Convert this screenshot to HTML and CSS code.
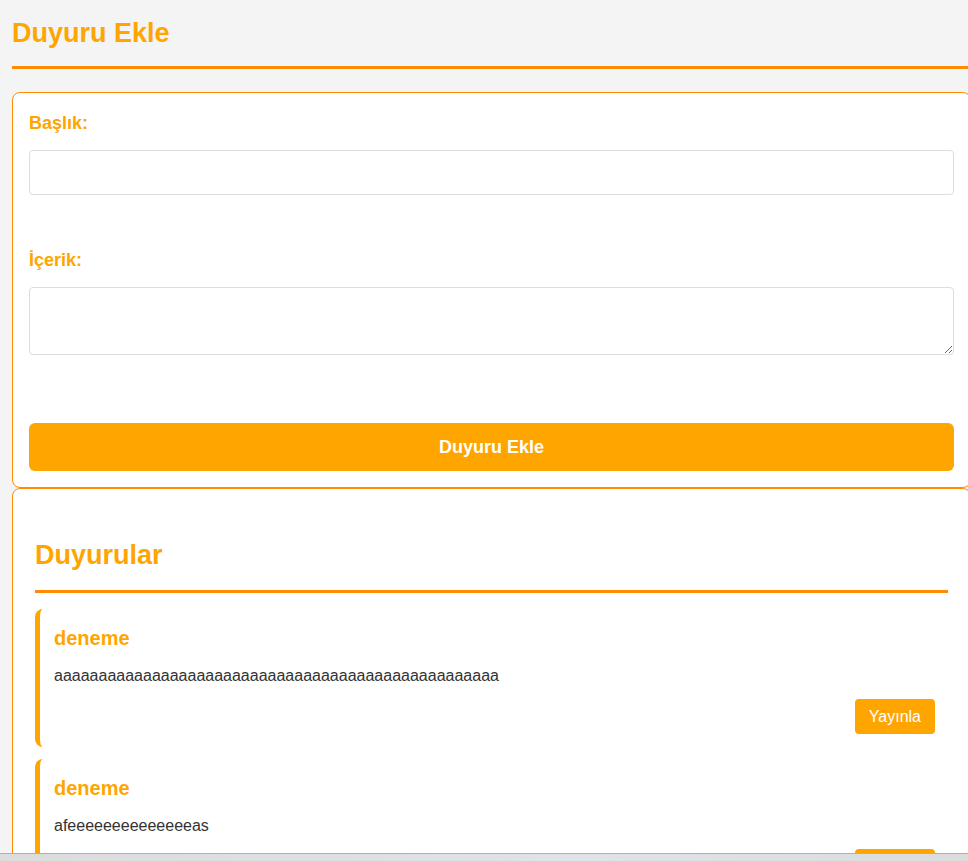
FILE: index.html
```html
<!DOCTYPE html>
<html lang="tr">
<head>
<meta charset="utf-8">
<title>Duyuru Ekle</title>
<link rel="stylesheet" href="styles.css">
</head>
<body>
<div class="page">
  <h1 class="page-title">Duyuru Ekle</h1>

  <form class="card form-card">
    <label class="field-label" for="baslik">Başlık:</label>
    <input class="field-input" id="baslik" type="text">
    <label class="field-label field-label--second" for="icerik">İçerik:</label>
    <textarea class="field-textarea" id="icerik"></textarea>
    <button class="submit-btn" type="button">Duyuru Ekle</button>
  </form>

  <section class="card list-card">
    <h2 class="list-title">Duyurular</h2>
    <div class="notice">
      <h3 class="notice-title">deneme</h3>
      <p class="notice-text">aaaaaaaaaaaaaaaaaaaaaaaaaaaaaaaaaaaaaaaaaaaaaaaaaa</p>
      <div class="notice-actions"><button class="publish-btn" type="button">Yayınla</button></div>
    </div>
    <div class="notice">
      <h3 class="notice-title">deneme</h3>
      <p class="notice-text">afeeeeeeeeeeeeeeas</p>
      <div class="notice-actions"><button class="publish-btn" type="button">Yayınla</button></div>
    </div>
  </section>
</div>
<div class="taskbar"></div>
</body>
</html>
```

FILE: styles.css
```css
html {
  overflow-x: hidden;
  scrollbar-width: none;
}
body {
  margin: 0;
  background: #f4f4f4;
  font-family: "Liberation Sans", Arial, sans-serif;
  font-size: 16px;
  color: #333;
}
.page {
  width: 959px;
  margin-left: 12px;
  padding-top: 18px;
}
.page-title {
  margin: 0 0 23px;
  font-size: 27px;
  line-height: 31px;
  font-weight: bold;
  color: #ffa500;
  padding-bottom: 17px;
  border-bottom: 3px solid #ff8c00;
}
.card {
  background: #fff;
  border: 1px solid #ff8c00;
  border-radius: 8px;
}
.form-card {
  display: flex;
  flex-direction: column;
  padding: 20px 16px 16px;
}
.field-label {
  display: block;
  font-size: 18px;
  line-height: 21px;
  font-weight: bold;
  color: #ffa500;
  margin-bottom: 16px;
}
.field-label--second {
  margin-top: 55px;
}
.field-input,
.field-textarea {
  box-sizing: border-box;
  width: 100%;
  border: 1px solid #ddd;
  border-radius: 4px;
  font-family: inherit;
  font-size: 16px;
  margin: 0;
  padding: 10px;
}
.field-input {
  height: 45px;
}
.field-textarea {
  height: 68px;
  resize: vertical;
  display: block;
}
.submit-btn {
  margin-top: 68px;
  height: 48px;
  border: none;
  border-radius: 6px;
  background: #ffa500;
  color: #fff;
  font-family: inherit;
  font-size: 18px;
  font-weight: bold;
}
.list-card {
  padding: 51px 22px 20px;
}
.list-title {
  margin: 0 0 16px;
  font-size: 27px;
  line-height: 31px;
  font-weight: bold;
  color: #ffa500;
  padding-bottom: 19px;
  border-bottom: 3px solid #ff8c00;
}
.notice {
  background: #fff;
  border-left: 5px solid #ffa500;
  border-radius: 8px;
  padding: 18px 13px 13px 14px;
  margin-bottom: 12px;
}
.notice-title {
  margin: 0;
  font-size: 20px;
  line-height: 23px;
  font-weight: bold;
  color: #ffa500;
}
.notice-text {
  margin: 17px 0 0;
  line-height: 18px;
  color: #333;
}
.notice-actions {
  display: flex;
  justify-content: flex-end;
  margin-top: 14px;
}
.publish-btn {
  height: 35px;
  padding: 0 14px;
  border: none;
  border-radius: 4px;
  background: #ffa500;
  color: #fff;
  font-family: inherit;
  font-size: 16px;
}
.taskbar {
  position: fixed;
  left: 0;
  right: 0;
  bottom: 0;
  height: 7px;
  border-top: 1px solid #b0b0b0;
  background: linear-gradient(90deg, #dcdcdc, #dfe2e8 60%, #dcdcdc);
}
```
